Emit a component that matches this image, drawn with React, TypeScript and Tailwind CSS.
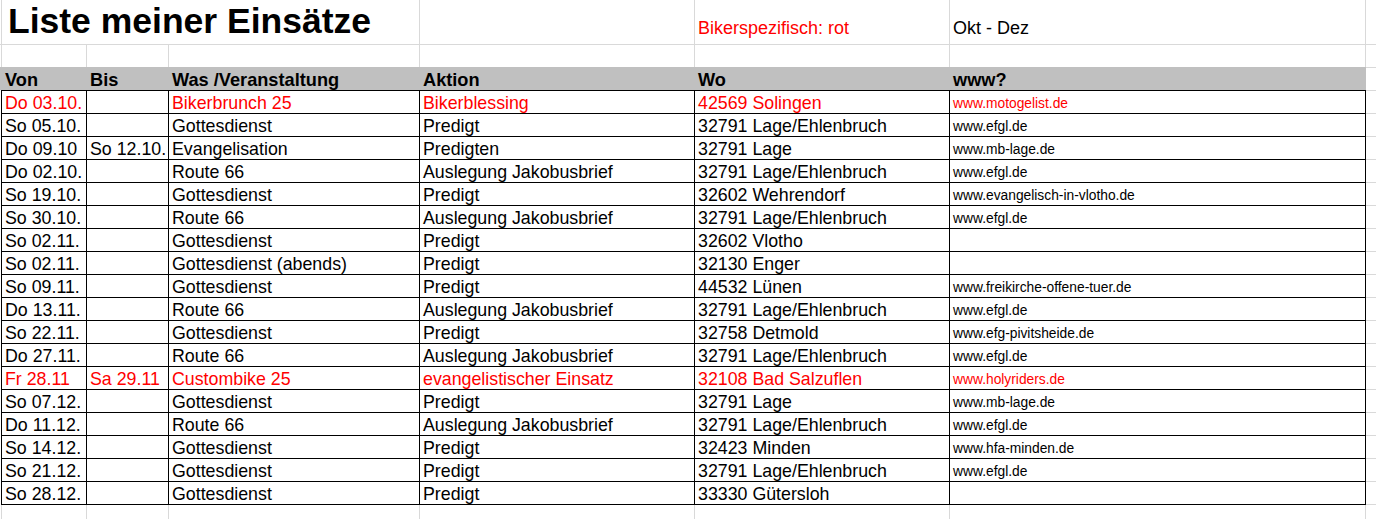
const rows = [
  ["Do 03.10.", "", "Bikerbrunch 25", "Bikerblessing", "42569 Solingen", "www.motogelist.de", true],
  ["So 05.10.", "", "Gottesdienst", "Predigt", "32791 Lage/Ehlenbruch", "www.efgl.de", false],
  ["Do 09.10", "So 12.10.", "Evangelisation", "Predigten", "32791 Lage", "www.mb-lage.de", false],
  ["Do 02.10.", "", "Route 66", "Auslegung Jakobusbrief", "32791 Lage/Ehlenbruch", "www.efgl.de", false],
  ["So 19.10.", "", "Gottesdienst", "Predigt", "32602 Wehrendorf", "www.evangelisch-in-vlotho.de", false],
  ["So 30.10.", "", "Route 66", "Auslegung Jakobusbrief", "32791 Lage/Ehlenbruch", "www.efgl.de", false],
  ["So 02.11.", "", "Gottesdienst", "Predigt", "32602 Vlotho", "", false],
  ["So 02.11.", "", "Gottesdienst (abends)", "Predigt", "32130 Enger", "", false],
  ["So 09.11.", "", "Gottesdienst", "Predigt", "44532 Lünen", "www.freikirche-offene-tuer.de", false],
  ["Do 13.11.", "", "Route 66", "Auslegung Jakobusbrief", "32791 Lage/Ehlenbruch", "www.efgl.de", false],
  ["So 22.11.", "", "Gottesdienst", "Predigt", "32758 Detmold", "www.efg-pivitsheide.de", false],
  ["Do 27.11.", "", "Route 66", "Auslegung Jakobusbrief", "32791 Lage/Ehlenbruch", "www.efgl.de", false],
  ["Fr 28.11", "Sa 29.11", "Custombike 25", "evangelistischer Einsatz", "32108 Bad Salzuflen", "www.holyriders.de", true],
  ["So 07.12.", "", "Gottesdienst", "Predigt", "32791 Lage", "www.mb-lage.de", false],
  ["Do 11.12.", "", "Route 66", "Auslegung Jakobusbrief", "32791 Lage/Ehlenbruch", "www.efgl.de", false],
  ["So 14.12.", "", "Gottesdienst", "Predigt", "32423 Minden", "www.hfa-minden.de", false],
  ["So 21.12.", "", "Gottesdienst", "Predigt", "32791 Lage/Ehlenbruch", "www.efgl.de", false],
  ["So 28.12.", "", "Gottesdienst", "Predigt", "33330 Gütersloh", "", false],
] as const

// column widths incl. the 1px left line
const widths = ["w-[85px]", "w-[82px]", "w-[251px]", "w-[275px]", "w-[255px]", "w-[417px]"]
const headers = ["Von", "Bis", "Was /Veranstaltung", "Aktion", "Wo", "www?"]

export default function App() {
  return (
    <div className="h-[519px] w-[1376px] overflow-hidden bg-white text-black font-['Liberation_Sans',Arial,sans-serif]">
      {/* title row */}
      <div className="flex h-[45px] border-b border-[#d9d9d9]">
        <div className="w-[1px]" />
        <div className="w-[418px] border-l border-[#d9d9d9] flex items-end pl-[6px] pb-[3px] whitespace-nowrap">
          <span className="text-[35.5px] leading-[40px] font-bold">Liste meiner Einsätze</span>
        </div>
        <div className="w-[275px] border-l border-[#d9d9d9]" />
        <div className="w-[255px] border-l border-[#d9d9d9] flex items-end pl-[3px] pb-[6px]">
          <span className="text-[18px] leading-[20px] text-[#ff0000]">Bikerspezifisch: rot</span>
        </div>
        <div className="w-[417px] border-x border-[#d9d9d9] flex items-end pl-[3px] pb-[6px]">
          <span className="text-[18px] leading-[20px]">Okt - Dez</span>
        </div>
      </div>

      {/* empty row */}
      <div className="flex h-[22px]">
        <div className="w-[1px]" />
        {widths.map((w, i) => (
          <div key={i} className={`${w} border-l border-[#d9d9d9] ${i === 5 ? "border-r" : ""}`} />
        ))}
      </div>

      {/* header row */}
      <div className="flex h-[23px]">
        <div className="w-[1px] bg-[#c0c0c0]" />
        {headers.map((h, i) => (
          <div key={h} className={`${widths[i]} bg-[#c0c0c0] flex items-end pl-[4px] text-[18.2px] leading-[20px] font-bold`}>
            {h}
          </div>
        ))}
        <div className="flex-1 border-t border-[#d9d9d9]" />
      </div>

      {/* data rows */}
      {rows.map((r, idx) => {
        const red = r[6]
        const last = idx === rows.length - 1
        return (
          <div key={idx} className={`flex h-[23px] ${last ? "h-[24px]" : ""}`}>
            <div className="w-[1px]" />
            {r.slice(0, 6).map((c, i) => (
              <div
                key={i}
                className={`${widths[i]} border-l border-t border-black ${i === 5 ? "border-r" : ""} ${last ? "border-b" : ""} flex items-end pl-[3px] whitespace-nowrap overflow-hidden ${red ? "text-[#ff0000]" : ""} ${i === 5 ? "text-[13.8px] leading-[18px]" : "text-[17.8px] leading-[20px]"}`}
              >
                {c}
              </div>
            ))}
            <div className={`flex-1 border-t border-[#d9d9d9] ${last ? "border-b" : ""}`} />
          </div>
        )
      })}

      {/* trailing empty row */}
      <div className="flex h-[20px]">
        <div className="w-[1px]" />
        {widths.map((w, i) => (
          <div key={i} className={`${w} border-l border-[#d9d9d9] ${i === 5 ? "border-r" : ""}`} />
        ))}
      </div>
    </div>
  )
}
